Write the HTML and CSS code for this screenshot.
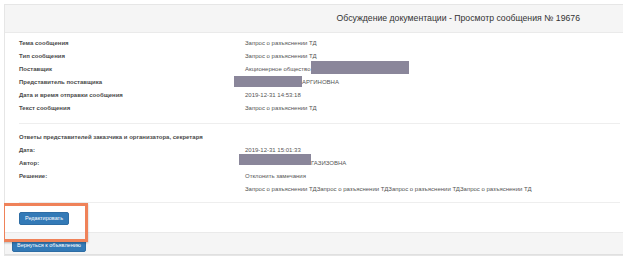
FILE: index.html
```html
<!DOCTYPE html>
<html>
<head>
  <title>Просмотр сообщения</title>
  <link rel="stylesheet" href="styles.css">
</head>
<body>
  <div class="panel">
    <div class="panel-heading">Обсуждение документации - Просмотр сообщения № 19676</div>
    <div class="panel-body">
      <dl class="info">
        <dt>Тема сообщения</dt>
        <dd>Запрос о разъяснении ТД</dd>
        <dt>Тип сообщения</dt>
        <dd>Запрос о разъяснении ТД</dd>
        <dt>Поставщик</dt>
        <dd>Акционерное общество<span class="redact redact-org"></span></dd>
        <dt>Представитель поставщика</dt>
        <dd><span class="redact redact-rep"></span>АРГИНОВНА</dd>
        <dt>Дата и время отправки сообщения</dt>
        <dd>2019-12-31 14:53:18</dd>
        <dt>Текст сообщения</dt>
        <dd>Запрос о разъяснении ТД</dd>
      </dl>

      <hr class="sep sep-top">

      <dl class="info">
        <dt class="section-title">Ответы представителей заказчика и организатора, секретаря</dt>
        <dt>Дата:</dt>
        <dd>2019-12-31 15:01:33</dd>
        <dt>Автор:</dt>
        <dd><span class="redact redact-author"></span>ГАЗИЗОВНА</dd>
        <dt>Решение:</dt>
        <dd>Отклонить замечания</dd>
        <dt></dt>
        <dd>Запрос о разъяснении ТДЗапрос о разъяснении ТДЗапрос о разъяснении ТДЗапрос о разъяснении ТД</dd>
      </dl>

      <hr class="sep sep-bottom">

      <div class="actions">
        <button class="btn">Редактировать</button>
        <span class="highlight"></span>
      </div>
    </div>
    <div class="panel-footer">
      <button class="btn btn-back">Вернуться к объявлению</button>
    </div>
  </div>
</body>
</html>
```

FILE: styles.css
```css
body {
  margin: 4px 1px 0 4px;
  font-family: "Liberation Sans", Arial, sans-serif;
  font-size: 6px;
  color: #444;
  background-color: #fff;
}

.panel {
  border: 1px solid #e6e6e6;
  border-right: none;
  background-color: #fff;
}

.panel-heading {
  height: 27px;
  line-height: 27px;
  background-color: #f5f5f5;
  border-bottom: 1px solid #eaeaea;
  text-align: right;
  padding-right: 43px;
  font-size: 8.7px;
  color: #333;
}

.panel-body {
  padding: 4px 3px 7px 14px;
}

.info {
  display: grid;
  grid-template-columns: 226px 1fr;
  grid-auto-rows: 13px;
  line-height: 13px;
  margin: 0;
}

.info dt {
  font-weight: bold;
  color: #4a4a4a;
  white-space: nowrap;
}

.info dd {
  margin: 0;
  white-space: nowrap;
  color: #555;
}

.info .section-title {
  grid-column: 1 / 3;
}

.redact {
  display: inline-block;
  vertical-align: top;
  background-color: #8a869a;
}

.redact-org {
  width: 98px;
  height: 13px;
  margin-top: -2px;
}

.redact-rep {
  width: 68px;
  height: 11px;
  margin-left: -11px;
}

.redact-author {
  width: 72px;
  height: 11px;
  margin-left: -6px;
  margin-top: -3px;
}

.sep {
  border: none;
  border-top: 1px solid #eee;
  margin: 0;
}

.sep-top {
  margin-top: 8px;
  margin-bottom: 7px;
}

.sep-bottom {
  margin-top: 6px;
  margin-bottom: 9px;
}

.actions {
  position: relative;
  height: 13px;
}

.btn {
  display: inline-block;
  height: 13px;
  padding: 0 5px;
  font-family: "Liberation Sans", Arial, sans-serif;
  font-size: 5.5px;
  line-height: 11px;
  color: #fff;
  background-color: #337ab7;
  border: 1px solid #2e6da4;
  border-radius: 2px;
  vertical-align: top;
}

.highlight {
  position: absolute;
  left: -17px;
  top: -9px;
  width: 80px;
  height: 33px;
  border: 3px solid #ef8259;
  box-shadow: 0 1px 2px rgba(0, 0, 0, 0.25);
}

.panel-footer {
  height: 23px;
  padding: 6px 7px 0;
  box-sizing: border-box;
  background-color: #f5f5f5;
  border-top: 1px solid #eaeaea;
  border-bottom: 1px solid #e0e0e0;
}

.btn-back {
  padding: 0 4px;
}
```
